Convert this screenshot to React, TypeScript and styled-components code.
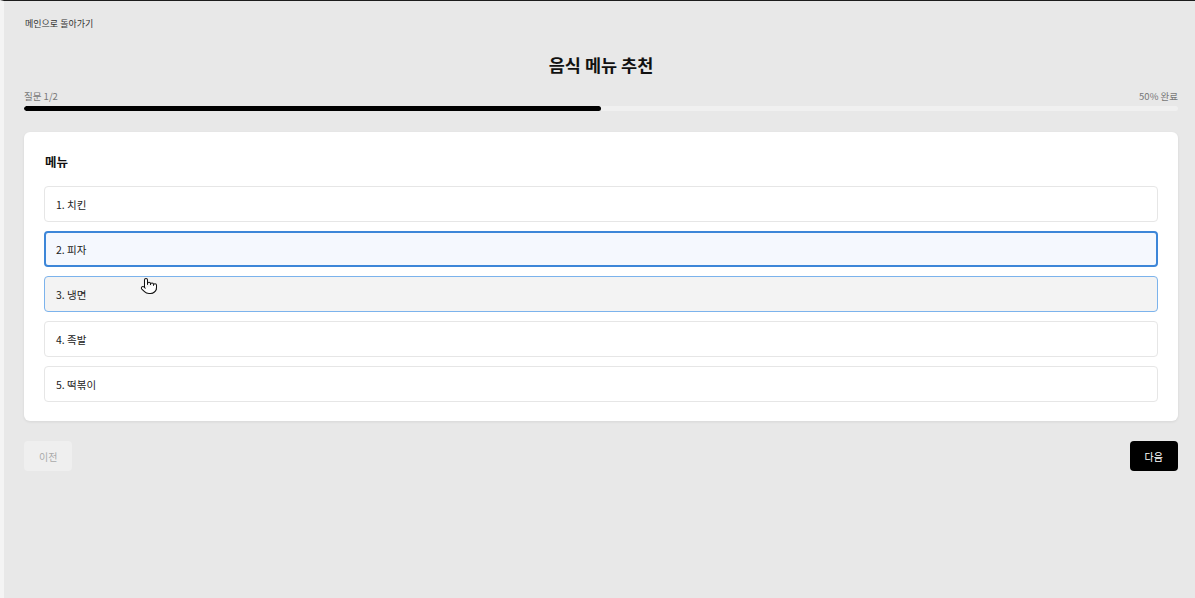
import React from "react";
import styled, { createGlobalStyle } from "styled-components";
import { Pointer } from "lucide-react";

const Global = createGlobalStyle`
  html, body { margin: 0; padding: 0; background: #e8e8e8; }
  body { font-family: "Noto Sans CJK KR", "Noto Sans", sans-serif; }
  * { box-sizing: border-box; }
`;

const Page = styled.div`
  position: relative;
  min-height: 598px;
  border-top: 1px solid #1c1c1c;
  border-left: 4px solid #f4f4f4;
  background: #e8e8e8;
  padding: 15px 17px 0 20px;
  display: flex;
  flex-direction: column;
`;

const BackLink = styled.a`
  font-size: 9px;
  line-height: 16px;
  color: #333;
  text-decoration: none;
  align-self: flex-start;
  margin-left: 1px;
`;

const Title = styled.h1`
  margin: 21px 0 0;
  text-align: center;
  font-size: 17.5px;
  line-height: 24px;
  font-weight: 700;
  color: #111;
`;

const ProgressHead = styled.div`
  display: flex;
  justify-content: space-between;
  margin-top: 12px;
  font-size: 9.5px;
  line-height: 14px;
  color: #777;
`;

const Track = styled.div`
  margin-top: 3px;
  height: 5px;
  border-radius: 3px;
  background: #f0f0f0;
  overflow: hidden;
`;

const Fill = styled.div`
  height: 100%;
  background: #000;
  border-radius: 3px;
`;

const Card = styled.section`
  margin-top: 21px;
  background: #fff;
  border-radius: 6px;
  box-shadow: 0 1px 3px rgba(0, 0, 0, 0.08);
  padding: 20px 20px 19px;
`;

const CardTitle = styled.h2`
  margin: 0 0 14px 1px;
  font-size: 12.5px;
  line-height: 20px;
  font-weight: 700;
  color: #111;
`;

const Options = styled.div`
  display: flex;
  flex-direction: column;
  gap: 9px;
`;

const Option = styled.div<{ $state?: "selected" | "hover" }>`
  height: 36px;
  display: flex;
  align-items: center;
  padding: 0 11px;
  border-radius: 4px;
  font-size: 10.5px;
  color: #222;
  background: ${(p) =>
    p.$state === "selected" ? "#f5f8fe" : p.$state === "hover" ? "#f3f3f3" : "#fff"};
  border: ${(p) =>
    p.$state === "selected"
      ? "2px solid #3d86d8"
      : p.$state === "hover"
      ? "1px solid #7cb3ec"
      : "1px solid #e6e6e6"};
  padding-left: ${(p) => (p.$state === "selected" ? "10px" : "11px")};
`;

const Footer = styled.div`
  display: flex;
  justify-content: space-between;
  align-items: center;
  margin-top: 20px;
`;

const Button = styled.button<{ $primary?: boolean }>`
  border: none;
  border-radius: 4px;
  font-family: inherit;
  font-size: 10px;
  height: 30px;
  padding: 0 15px;
  min-width: 48px;
  background: ${(p) => (p.$primary ? "#000" : "#efefef")};
  color: ${(p) => (p.$primary ? "#fff" : "#aaa")};
  cursor: pointer;
`;

const Cursor = styled.div`
  position: absolute;
  left: 136px;
  top: 276px;
  line-height: 0;
`;

const items = ["1. 치킨", "2. 피자", "3. 냉면", "4. 족발", "5. 떡볶이"];

export default function App() {
  return (
    <>
      <Global />
      <Page>
        <BackLink href="#">메인으로 돌아가기</BackLink>
        <Title>음식 메뉴 추천</Title>
        <ProgressHead>
          <span>질문 1/2</span>
          <span>50% 완료</span>
        </ProgressHead>
        <Track>
          <Fill style={{ width: "50%" }} />
        </Track>
        <Card>
          <CardTitle>메뉴</CardTitle>
          <Options>
            {items.map((t, i) => (
              <Option key={t} $state={i === 1 ? "selected" : i === 2 ? "hover" : undefined}>
                {t}
              </Option>
            ))}
          </Options>
        </Card>
        <Footer>
          <Button disabled>이전</Button>
          <Button $primary>다음</Button>
        </Footer>
        <Cursor>
          <Pointer size={18} color="#111" fill="#fff" strokeWidth={1.4} />
        </Cursor>
      </Page>
    </>
  );
}
